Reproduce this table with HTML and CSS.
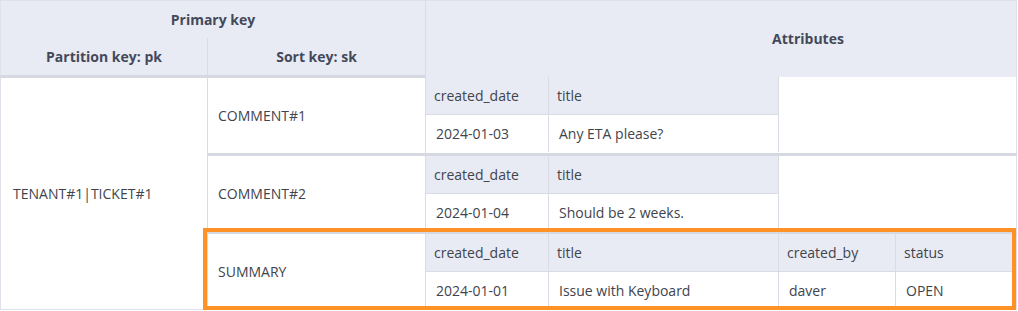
FILE: index.html
```html
<!DOCTYPE html>
<html lang="en">
<head>
    <meta charset="UTF-8">
    <title>Single table design - ticket items</title>
    <link rel="stylesheet" href="styles.css">
</head>
<body>
    <div class="wrap">
        <table class="items">
            <thead>
                <tr>
                    <th colspan="2" class="pk-head">Primary key</th>
                    <th rowspan="2" class="attr-head">Attributes</th>
                </tr>
                <tr>
                    <th class="col-pk">Partition key: pk</th>
                    <th class="col-sk">Sort key: sk</th>
                </tr>
            </thead>
            <tbody>
                <tr class="item">
                    <td rowspan="3" class="pk">TENANT#1|TICKET#1</td>
                    <td class="sk">COMMENT#1</td>
                    <td class="attrs">
                        <table class="inner">
                            <tr><th class="c-date">created_date</th><th class="c-title">title</th></tr>
                            <tr><td>2024-01-03</td><td>Any ETA please?</td></tr>
                        </table>
                    </td>
                </tr>
                <tr class="item">
                    <td class="sk">COMMENT#2</td>
                    <td class="attrs">
                        <table class="inner">
                            <tr><th class="c-date">created_date</th><th class="c-title">title</th></tr>
                            <tr><td>2024-01-04</td><td>Should be 2 weeks.</td></tr>
                        </table>
                    </td>
                </tr>
                <tr class="item">
                    <td class="sk">SUMMARY</td>
                    <td class="attrs">
                        <table class="inner wide">
                            <tr><th class="c-date">created_date</th><th class="c-title">title</th><th class="c-by">created_by</th><th>status</th></tr>
                            <tr><td>2024-01-01</td><td>Issue with Keyboard</td><td>daver</td><td>OPEN</td></tr>
                        </table>
                    </td>
                </tr>
            </tbody>
        </table>
        <div class="highlight"></div>
    </div>
</body>
</html>
```

FILE: styles.css
```css
body {
    margin: 0;
    font-family: 'Open Sans', 'Noto Sans', sans-serif;
    font-size: 14px;
    color: #3f444d;
    background: #fff;
}
.wrap {
    position: relative;
    width: 1017px;
}
.items {
    width: 1017px;
    border-collapse: collapse;
    border: 1px solid #dfe2ea;
}
.items thead th {
    background: #e9ebf4;
    color: #44495a;
    font-weight: 700;
    text-align: center;
    padding: 0;
    height: 37px;
}
.items thead tr:last-child th {
    border-bottom: 3px solid #d6d9e2;
}
.col-pk {
    width: 206px;
}
.col-sk {
    width: 217px;
    border-left: 1px solid #d9dce5;
}
/* the attributes column runs on past the right edge */
.items thead th.attr-head {
    border-left: 1px solid #d9dce5;
    padding-left: 174px;
}
.items tbody td {
    padding: 0 10px;
    vertical-align: middle;
}
.items td.pk {
    padding-left: 12px;
}
.items td.sk {
    border-left: 1px solid #d9dce5;
    height: 75px;
}
.items td.attrs {
    border-left: 1px solid #d9dce5;
    padding: 0;
    vertical-align: top;
}
.item + .item td.sk,
.item + .item td.attrs {
    border-top: 3px solid #d6d9e2;
}
.inner {
    border-collapse: collapse;
    width: 353px;
    border-right: 1px solid #d9dce5;
}
.inner.wide {
    width: 587px;
}
.inner th,
.inner td {
    text-align: left;
    font-weight: 400;
    padding: 0 8px;
    height: 37px;
    white-space: nowrap;
}
.inner th {
    background: #e9ebf4;
    border-bottom: 1px solid #d9dce5;
}
.inner th + th,
.inner td + td {
    border-left: 1px solid #d9dce5;
}
.c-date {
    width: 106px;
}
.c-title {
    width: 213px;
}
.c-by {
    width: 100px;
}
.highlight {
    position: absolute;
    left: 203px;
    top: 228px;
    width: 805px;
    height: 74px;
    border: 4px solid #ff9226;
}
```
